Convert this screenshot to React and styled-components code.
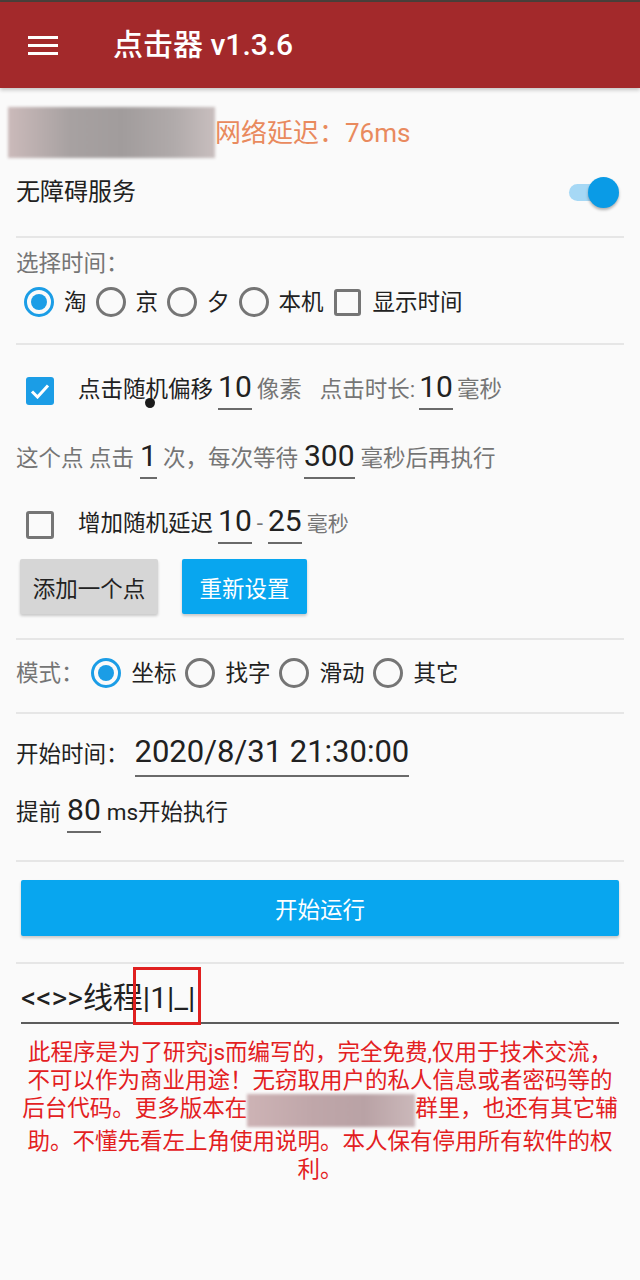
import React from "react";
import styled, { createGlobalStyle } from "styled-components";

const GlobalStyle = createGlobalStyle`
  html, body { margin: 0; padding: 0; background: #fafafa; }
  body { font-family: Roboto, "Noto Sans CJK SC", sans-serif; color: #212121; }
  * { box-sizing: border-box; }
`;

const Page = styled.div`
  position: relative;
  width: 640px;
  min-height: 1280px;
  background: #fafafa;
  overflow: hidden;
`;

const StatusStrip = styled.div`
  height: 2px;
  background: #4a403b;
`;

const AppBar = styled.header`
  height: 86px;
  background: #a3292b;
  display: flex;
  align-items: center;
  padding-left: 28px;
  box-shadow: 0 2px 4px rgba(0, 0, 0, 0.22);
`;

const MenuIcon = styled.svg`
  width: 30px;
  height: 20px;
  display: block;
`;

const Title = styled.h1`
  margin: 0 0 0 55px;
  font-size: 30px;
  font-weight: 500;
  line-height: 1;
  color: #fff;
`;

const Row = styled.div`
  display: flex;
  align-items: center;
  height: ${(p) => p.$h}px;
  margin-top: ${(p) => p.$mt || 0}px;
  padding-left: ${(p) => p.$pl || 0}px;
  padding-right: ${(p) => p.$pr || 0}px;
  justify-content: ${(p) => p.$justify || "flex-start"};
  gap: ${(p) => p.$gap || 0}px;
`;

const Blur = styled.span`
  display: inline-block;
  flex: none;
  width: ${(p) => p.$w}px;
  height: ${(p) => p.$h}px;
  background: ${(p) => p.$bg};
  filter: blur(1.5px);
  vertical-align: middle;
`;

const Latency = styled.span`
  font-size: 26px;
  line-height: 1;
  color: #e98a5e;
`;

const Text = styled.span`
  font-size: ${(p) => p.$size || 22.5}px;
  line-height: 1;
  color: ${(p) => (p.$muted ? "#757575" : "#212121")};
  margin-left: ${(p) => p.$ml || 0}px;
  margin-right: ${(p) => p.$mr || 0}px;
  white-space: pre;
`;

const SwitchWrap = styled.span`
  position: relative;
  display: inline-block;
  width: 50px;
  height: 31px;
`;

const SwitchTrack = styled.span`
  position: absolute;
  left: 0;
  top: 7px;
  width: 40px;
  height: 17px;
  border-radius: 9px;
  background: #a6d8f5;
`;

const SwitchThumb = styled.span`
  position: absolute;
  right: 0;
  top: 0;
  width: 31px;
  height: 31px;
  border-radius: 50%;
  background: #0a9be6;
  box-shadow: 0 2px 3px rgba(0, 0, 0, 0.3);
`;

const Divider = styled.div`
  height: 2px;
  margin: ${(p) => p.$mt || 0}px 16px 0;
  background: #e6e6e6;
`;

const Label = styled.div`
  font-size: 22.5px;
  line-height: 30px;
  color: #757575;
  padding-left: 16px;
  margin-top: ${(p) => p.$mt || 0}px;
`;

const Option = styled.label`
  display: inline-flex;
  align-items: center;
`;

const Radio = styled.span`
  flex: none;
  width: 30px;
  height: 30px;
  border-radius: 50%;
  border: 3px solid ${(p) => (p.$on ? "#1b9de6" : "#757575")};
  display: flex;
  align-items: center;
  justify-content: center;
  &::after {
    content: "";
    display: ${(p) => (p.$on ? "block" : "none")};
    width: 16px;
    height: 16px;
    border-radius: 50%;
    background: #1b9de6;
  }
`;

const Box = styled.span`
  flex: none;
  width: ${(p) => p.$size || 28}px;
  height: ${(p) => p.$size || 28}px;
  border-radius: 3px;
  border: ${(p) => (p.$on ? "none" : "3px solid #757575")};
  background: ${(p) => (p.$on ? "#1b9de6" : "transparent")};
  margin-left: ${(p) => p.$ml || 0}px;
  display: flex;
  align-items: center;
  justify-content: center;
`;

const Line = styled.span`
  display: flex;
  align-items: baseline;
  margin-left: ${(p) => p.$ml || 0}px;
`;

const NumField = styled.span`
  display: inline-block;
  font-size: ${(p) => p.$size || 30}px;
  line-height: 1;
  color: #212121;
  padding-bottom: ${(p) => p.$pb || 6}px;
  border-bottom: 2px solid #6a6a6a;
  margin: 0 ${(p) => p.$mx || 5}px;
  white-space: pre;
`;

const Button = styled.button`
  border: none;
  border-radius: 2px;
  height: ${(p) => p.$h || 55}px;
  width: ${(p) => (p.$w ? `${p.$w}px` : "auto")};
  background: ${(p) => (p.$primary ? "#08a6ef" : "#d6d6d6")};
  color: ${(p) => (p.$primary ? "#ffffff" : "#222222")};
  font-family: inherit;
  font-size: 22.5px;
  padding: 0;
  box-shadow: 0 2px 3px rgba(0, 0, 0, 0.2);
`;

const RunButton = styled(Button)`
  display: block;
  margin: 18px 21px 0;
  width: calc(100% - 42px);
`;

const ThreadField = styled.div`
  position: relative;
  display: flex;
  align-items: center;
  height: 57px;
  margin: 3px 21px 0;
  border-bottom: 2px solid #5c5c5c;
  font-size: 30px;
  color: #212121;
`;

const Highlight = styled.span`
  position: absolute;
  left: 112px;
  top: 0;
  width: 68px;
  height: 58px;
  border: 3px solid #e02020;
`;

const Notice = styled.div`
  margin-top: 14px;
  text-align: center;
  color: #e3201f;
  font-size: 22.5px;
  line-height: 28px;
`;

const NoticeLine = styled.div`
  white-space: nowrap;
`;

const TouchDot = styled.span`
  position: absolute;
  left: 145px;
  top: 398px;
  width: 10px;
  height: 10px;
  border-radius: 50% 50% 50% 50% / 45% 45% 55% 55%;
  background: #1a1a1a;
`;

const Check = () => (
  <svg width="20" height="16" viewBox="0 0 20 16">
    <path d="M2 8.5 L7.5 14 L18 2.5" fill="none" stroke="#fff" strokeWidth="3" />
  </svg>
);

export default function App() {
  return (
    <Page>
      <GlobalStyle />
      <StatusStrip />
      <AppBar>
        <MenuIcon viewBox="0 0 30 20">
          <rect x="0" y="1" width="30" height="3" fill="#fff" />
          <rect x="0" y="9" width="30" height="3" fill="#fff" />
          <rect x="0" y="17" width="30" height="3" fill="#fff" />
        </MenuIcon>
        <Title>点击器 v1.3.6</Title>
      </AppBar>

      <Row $h={51} $mt={19} $pl={8}>
        <Blur
          $w={207}
          $h={51}
          $bg="linear-gradient(90deg, #cbbaba 0%, #a7a1a1 30%, #a19c9c 55%, #b0aaaa 80%, #c8bebe 100%)"
        />
        <Latency>网络延迟：76ms</Latency>
      </Row>

      <Row $h={68} $pl={16} $pr={21} $justify="space-between">
        <Text $size={24}>无障碍服务</Text>
        <SwitchWrap>
          <SwitchTrack />
          <SwitchThumb />
        </SwitchWrap>
      </Row>

      <Divider $mt={10} />

      <Label $mt={10}>选择时间：</Label>
      <Row $h={40} $mt={4} $pl={24}>
        <Option>
          <Radio $on />
          <Text $ml={10} $mr={9}>淘</Text>
        </Option>
        <Option>
          <Radio />
          <Text $ml={10} $mr={9}>京</Text>
        </Option>
        <Option>
          <Radio />
          <Text $ml={10} $mr={9}>夕</Text>
        </Option>
        <Option>
          <Radio />
          <Text $ml={10} $mr={10}>本机</Text>
        </Option>
        <Option>
          <Box $size={27} />
          <Text $ml={12}>显示时间</Text>
        </Option>
      </Row>

      <Divider $mt={21} />

      <Row $h={44} $mt={24}>
        <Box $on $ml={26}>
          <Check />
        </Box>
        <Line $ml={24}>
          <Text>点击随机偏移</Text>
          <NumField>10</NumField>
          <Text $muted>像素</Text>
          <Text $muted $ml={18}>点击时长:</Text>
          <NumField $mx={4}>10</NumField>
          <Text $muted>毫秒</Text>
        </Line>
      </Row>

      <Row $h={44} $mt={25} $pl={16}>
        <Line>
          <Text $muted>这个点 点击</Text>
          <NumField $mx={6}>1</NumField>
          <Text $muted>次，每次等待</Text>
          <NumField $mx={6}>300</NumField>
          <Text $muted>毫秒后再执行</Text>
        </Line>
      </Row>

      <Row $h={44} $mt={21}>
        <Box $ml={26} />
        <Line $ml={24}>
          <Text>增加随机延迟</Text>
          <NumField>10</NumField>
          <Text $muted>-</Text>
          <NumField>25</NumField>
          <Text $muted $size={21}>毫秒</Text>
        </Line>
      </Row>

      <Row $h={55} $mt={12} $pl={20} $gap={24}>
        <Button $w={138}>添加一个点</Button>
        <Button $w={125} $primary>重新设置</Button>
      </Row>

      <Divider $mt={24} />

      <Row $h={66} $pl={16}>
        <Text $muted $mr={7}>模式：</Text>
        <Option>
          <Radio $on />
          <Text $ml={11} $mr={8}>坐标</Text>
        </Option>
        <Option>
          <Radio />
          <Text $ml={11} $mr={8}>找字</Text>
        </Option>
        <Option>
          <Radio />
          <Text $ml={11} $mr={8}>滑动</Text>
        </Option>
        <Option>
          <Radio />
          <Text $ml={11}>其它</Text>
        </Option>
      </Row>

      <Divider $mt={6} />

      <Row $h={50} $mt={17} $pl={16}>
        <Line>
          <Text>开始时间：</Text>
          <NumField $mx={6} $pb={8} $size={31}>2020/8/31 21:30:00</NumField>
        </Line>
      </Row>

      <Row $h={44} $mt={11} $pl={16}>
        <Line>
          <Text>提前</Text>
          <NumField $mx={6}>80</NumField>
          <Text>ms开始执行</Text>
        </Line>
      </Row>

      <Divider $mt={24} />

      <RunButton $primary $h={56}>开始运行</RunButton>

      <Divider $mt={26} />

      <ThreadField>
        &lt;&lt;&gt;&gt;线程|1|_|
        <Highlight />
      </ThreadField>

      <Notice>
        <NoticeLine>此程序是为了研究js而编写的，完全免费,仅用于技术交流，</NoticeLine>
        <NoticeLine>不可以作为商业用途！无窃取用户的私人信息或者密码等的</NoticeLine>
        <NoticeLine>
          后台代码。更多版本在
          <Blur
            $w={168}
            $h={33}
            $bg="linear-gradient(90deg, #cdb3b5 0%, #bfa6a9 40%, #b9a2a5 70%, #cbb8ba 100%)"
          />
          群里，也还有其它辅
        </NoticeLine>
        <NoticeLine>助。不懂先看左上角使用说明。本人保有停用所有软件的权</NoticeLine>
        <NoticeLine>利。</NoticeLine>
      </Notice>

      <TouchDot />
    </Page>
  );
}
